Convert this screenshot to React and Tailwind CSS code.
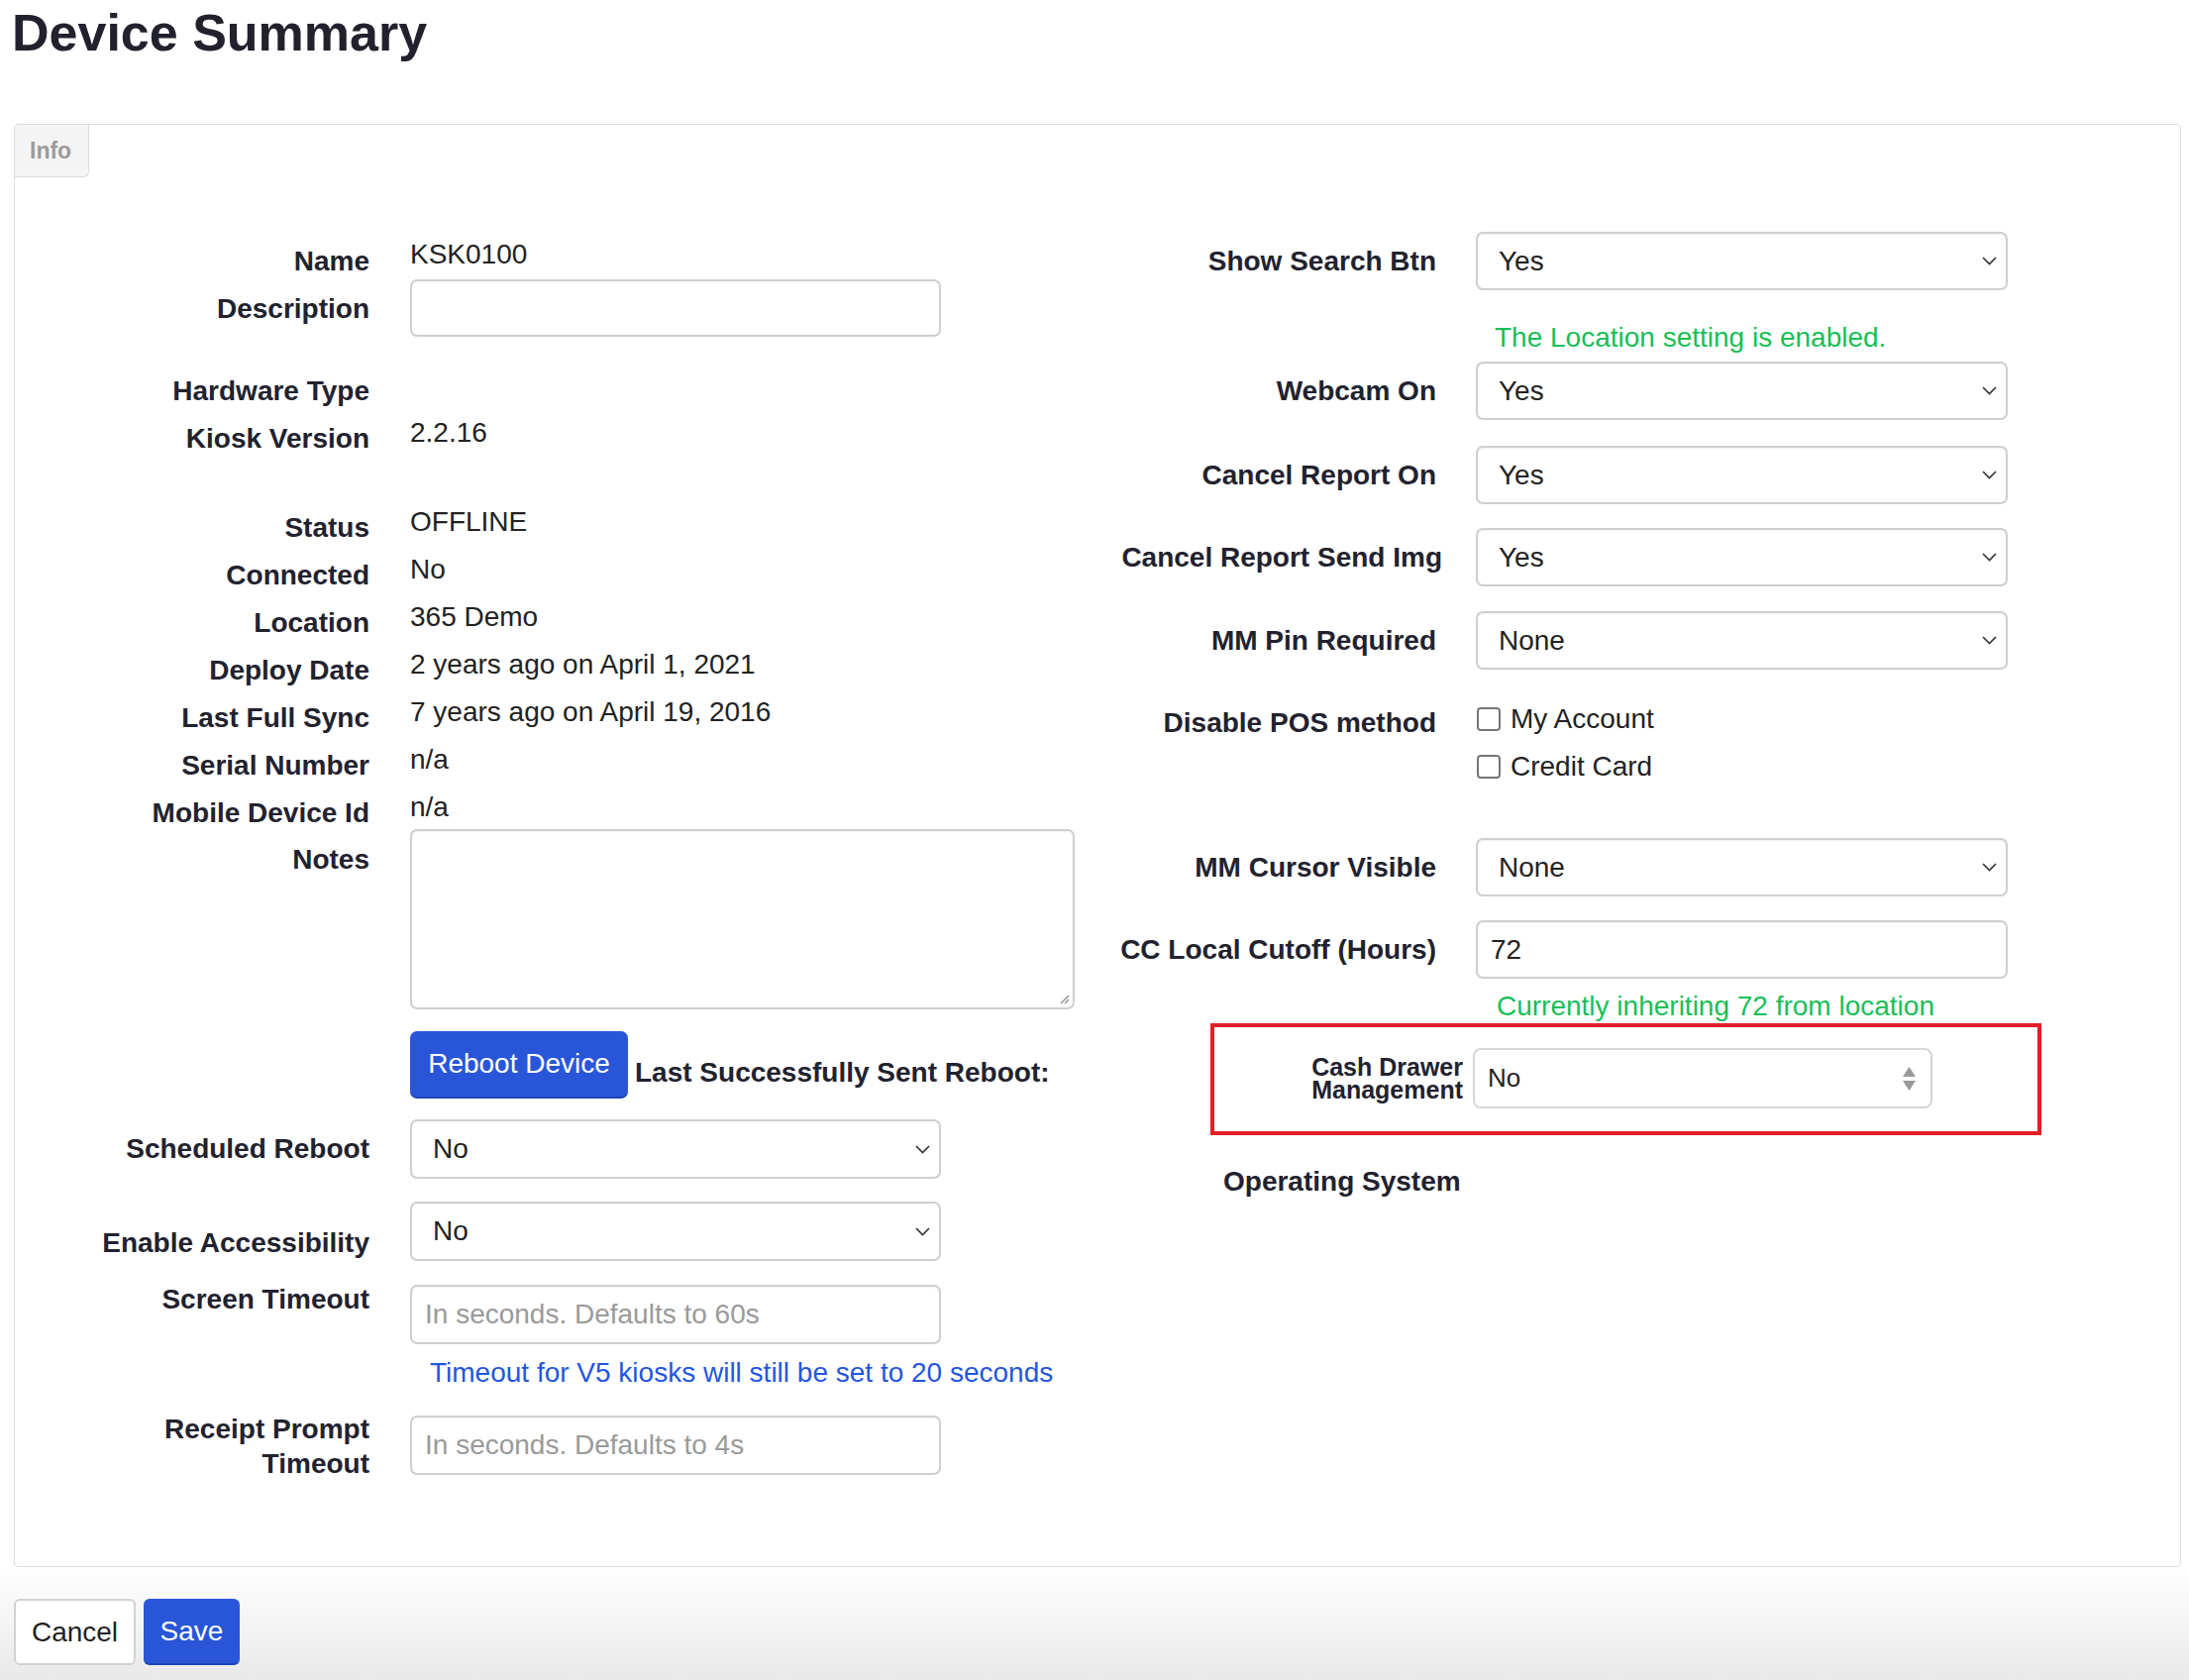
import React from 'react'

const label = 'text-[28px] font-bold leading-[34px] text-right text-[#22222e]'
const value = 'text-[28px] leading-[34px] text-[#222]'
const field = 'rounded-[7px] border-2 border-[#cfcfcf] bg-white shadow-[inset_0_1px_2px_rgba(0,0,0,0.06)]'

const Chevron = () => (
  <svg width="15" height="9" viewBox="0 0 15 9" fill="none">
    <path d="M1 1 L7.5 7.5 L14 1" stroke="#333" strokeWidth="1.6" />
  </svg>
)

const Select = ({ text, w = 'w-[537px]', h = 'h-[59px]' }) => (
  <div className={`${field} ${w} ${h} flex items-center justify-between pl-[21px] pr-[9px]`}>
    <span className="text-[28px] text-[#222]">{text}</span>
    <Chevron />
  </div>
)

const Input = ({ placeholder, text, w = 'w-[536px]', h = 'h-[58px]' }) => (
  <div className={`${field} ${w} ${h} flex items-center pl-[13px]`}>
    {text ? (
      <span className="text-[28px] text-[#222]">{text}</span>
    ) : (
      <span className="text-[28px] text-[#9a9a9a]">{placeholder}</span>
    )}
  </div>
)

const InfoRow = ({ name, val, h = 'h-[48px]' }) => (
  <div className={`flex ${h}`}>
    <div className={`w-[358px] pt-[6px] ${label}`}>{name}</div>
    {val && <div className={`ml-[41px] ${value}`}>{val}</div>}
  </div>
)

const RightRow = ({ name, children, className = '' }) => (
  <div className={`flex items-center ${className}`}>
    <div className={`w-[350px] ${label}`}>{name}</div>
    <div className="ml-[40px]">{children}</div>
  </div>
)

const Checkbox = ({ text }) => (
  <div className="flex h-[48px] items-center">
    <span className="h-[24px] w-[24px] rounded-[4px] border-2 border-[#767676] bg-white" />
    <span className={`ml-[10px] ${value}`}>{text}</span>
  </div>
)

export default function App() {
  return (
    <div className="min-h-[1696px] w-[2210px] bg-white flex flex-col" style={{ fontFamily: '"Liberation Sans", Arial, sans-serif' }}>
      <h1 className="pl-[12px] pt-[2px] text-[52px] font-bold leading-[62px] text-[#22222e]">Device Summary</h1>

      <div className="ml-[14px] mt-[61px] w-[2188px] rounded-[4px] border border-[#dcdcdc] pb-[86px]">
        <div className="flex h-[53px] w-[75px] items-center rounded-br-[6px] border-b border-r border-[#dcdcdc] bg-[#f4f4f4] pl-[15px]">
          <span className="text-[23px] font-bold text-[#9b9b9b]">Info</span>
        </div>

        <div className="flex items-start">
          {/* left column */}
          <div className="w-[1085px] pt-[61px]">
            <div className="flex h-[42px]">
              <div className={`w-[358px] pt-[7px] ${label}`}>Name</div>
              <div className={`ml-[41px] ${value}`}>KSK0100</div>
            </div>
            <div className="flex items-center">
              <div className={`w-[358px] pt-[2px] ${label}`}>Description</div>
              <div className="ml-[41px]"><Input /></div>
            </div>

            <div className="mt-[32px]">
              <InfoRow name="Hardware Type" />
              <InfoRow name="Kiosk Version" val="2.2.16" />
            </div>

            <div className="mt-[42px]">
              <InfoRow name="Status" val="OFFLINE" />
              <InfoRow name="Connected" val="No" />
              <InfoRow name="Location" val="365 Demo" />
              <InfoRow name="Deploy Date" val="2 years ago on April 1, 2021" />
              <InfoRow name="Last Full Sync" val="7 years ago on April 19, 2016" />
              <InfoRow name="Serial Number" val="n/a" />
              <InfoRow name="Mobile Device Id" val="n/a" h="h-[39px]" />
            </div>

            <div className="flex items-start">
              <div className={`w-[358px] pt-[14px] ${label}`}>Notes</div>
              <div className={`ml-[41px] relative h-[182px] w-[671px] ${field}`}>
                <svg className="absolute bottom-[3px] right-[3px]" width="12" height="12" viewBox="0 0 12 12">
                  <path d="M11 3 L3 11 M11 7 L7 11" stroke="#888" strokeWidth="1.2" />
                </svg>
              </div>
            </div>

            <div className="mt-[22px] flex items-center pl-[399px]">
              <button className="h-[68px] w-[220px] rounded-[7px] border-b-2 border-[#1f45b8] bg-[#2956d9] text-[28px] text-white">
                Reboot Device
              </button>
              <span className="ml-[7px] pt-[15px] text-[28px] font-bold leading-[34px] text-[#22222e]">Last Successfully Sent Reboot:</span>
            </div>

            <div className="mt-[21px] flex items-center">
              <div className={`w-[358px] ${label}`}>Scheduled Reboot</div>
              <div className="ml-[41px]"><Select text="No" w="w-[536px]" h="h-[60px]" /></div>
            </div>

            <div className="mt-[23px] flex items-start">
              <div className={`w-[358px] pt-[25px] ${label}`}>Enable Accessibility</div>
              <div className="ml-[41px]"><Select text="No" w="w-[536px]" h="h-[60px]" /></div>
            </div>

            <div className="mt-[22px] flex items-start">
              <div className={`w-[358px] ${label}`}>Screen Timeout</div>
              <div className="ml-[41px] mt-[2px]"><Input placeholder="In seconds. Defaults to 60s" h="h-[60px]" /></div>
            </div>
            <div className="mt-[12px] pl-[419px] text-[28px] leading-[34px] text-[#2356de]">
              Timeout for V5 kiosks will still be set to 20 seconds
            </div>

            <div className="mt-[22px] flex items-start">
              <div className="w-[358px] text-[28px] font-bold leading-[35px] text-right text-[#22222e]">
                Receipt Prompt<br />Timeout
              </div>
              <div className="ml-[41px] mt-[4px]"><Input placeholder="In seconds. Defaults to 4s" h="h-[60px]" /></div>
            </div>
          </div>

          {/* right column */}
          <div className="pt-[55px]">
            <RightRow name="Show Search Btn"><Select text="Yes" /></RightRow>
            <div className="ml-[409px] mt-[31px] text-[28px] leading-[34px] text-[#17bf57]">The Location setting is enabled.</div>
            <RightRow name="Webcam On" className="mt-[7px]"><Select text="Yes" /></RightRow>
            <RightRow name="Cancel Report On" className="mt-[26px]"><Select text="Yes" /></RightRow>
            <div className="mt-[24px] flex items-center">
              <div className={`w-[350px] -mr-[6px] whitespace-nowrap ${label}`}>
                <span className="inline-block -mr-[6px]">Cancel Report Send Img</span>
              </div>
              <div className="ml-[46px]"><Select text="Yes" /></div>
            </div>
            <RightRow name="MM Pin Required" className="mt-[25px]"><Select text="None" /></RightRow>

            <div className="mt-[26px] flex items-start">
              <div className={`w-[350px] pt-[11px] ${label}`}>Disable POS method</div>
              <div className="ml-[41px]">
                <Checkbox text="My Account" />
                <Checkbox text="Credit Card" />
              </div>
            </div>

            <RightRow name="MM Cursor Visible" className="mt-[48px]"><Select text="None" /></RightRow>
            <RightRow name="CC Local Cutoff (Hours)" className="mt-[24px]">
              <Input text="72" w="w-[537px]" h="h-[59px]" />
            </RightRow>
            <div className="ml-[411px] mt-[11px] text-[28px] leading-[34px] text-[#17bf57]">Currently inheriting 72 from location</div>

            <div className="ml-[122px] flex w-[839px] items-center border-[4px] border-[#e31e26] pb-[23px] pt-[21px]">
              <div className="w-[251px] text-right text-[25px] font-bold leading-[23px] text-[#22222e]">
                Cash Drawer<br />Management
              </div>
              <div className="ml-[10px] flex h-[61px] w-[464px] items-center justify-between rounded-[8px] border-2 border-[#d6d6d6] bg-white pl-[13px] pr-[14px]">
                <span className="text-[26px] text-[#222]">No</span>
                <svg width="15" height="30" viewBox="0 0 15 30">
                  <path d="M7.5 3 L14 13 L1 13 Z" fill="#9a9a9a" />
                  <path d="M1 17 L14 17 L7.5 27 Z" fill="#9a9a9a" />
                </svg>
              </div>
            </div>

            <div className="ml-[135px] mt-[30px] text-[28px] font-bold leading-[34px] text-[#22222e]">Operating System</div>
          </div>
        </div>
      </div>

      <div className="flex flex-1 items-start gap-[8px] bg-gradient-to-b from-white to-[#e9e9e9] px-[14px] pt-[32px] pb-[15px]">
        <button className="h-[67px] w-[123px] rounded-[6px] border-2 border-[#d2d2d2] bg-white text-[28px] text-[#222]">Cancel</button>
        <button className="h-[67px] w-[97px] rounded-[6px] border-b-2 border-[#1f45b8] bg-[#2956d9] text-[28px] text-white">Save</button>
      </div>
    </div>
  )
}
